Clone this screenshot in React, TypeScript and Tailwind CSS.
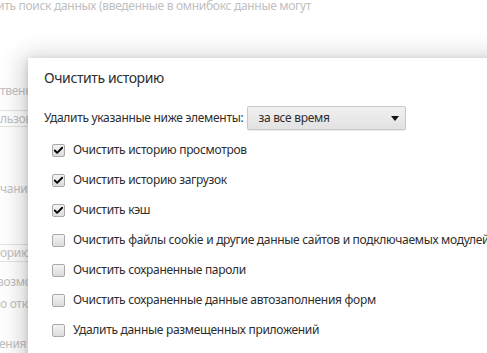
import { Check } from "lucide-react";

const items = [
  { label: "Очистить историю просмотров", checked: true },
  { label: "Очистить историю загрузок", checked: true },
  { label: "Очистить кэш", checked: true },
  { label: "Очистить файлы cookie и другие данные сайтов и подключаемых модулей", checked: false },
  { label: "Очистить сохраненные пароли", checked: false },
  { label: "Очистить сохраненные данные автозаполнения форм", checked: false },
  { label: "Удалить данные размещенных приложений", checked: false },
];

function Checkbox({ checked }: { checked: boolean }) {
  return (
    <span className="flex h-[13px] w-[13px] shrink-0 items-center justify-center rounded-[2px] border border-[#a9a9a9] bg-gradient-to-b from-[#f3f3f3] to-[#dcdcdc]">
      {checked && <Check className="h-[11px] w-[11px] text-black" strokeWidth={4} />}
    </span>
  );
}

export default function App() {
  return (
    <div
      className="relative h-[353px] w-[487px] overflow-hidden bg-white text-[12px] tracking-[-0.3px] text-[#c0c0c0]"
      style={{ fontFamily: "'Noto Sans', 'Open Sans', sans-serif" }}
    >
      {/* page behind the dialog */}
      <div className="flex flex-col whitespace-nowrap">
        <p className="-ml-[3px] mt-[1px] h-[11px] leading-[10px]">
          ить поиск данных (введенные в омнибокс данные могут
        </p>
        <p className="mt-[70px] leading-[18px]">твенные</p>
        <div className="mt-[10px] h-[17px] border-y border-[#e4e4e4] leading-[15px]">
          <span className="block">льзователь</span>
        </div>
        <p className="mt-[53px] leading-[18px]">чанию</p>
        <div className="mt-[46px] h-[18px] border-y border-[#e4e4e4] leading-[16px]">
          <span className="block">орию</span>
        </div>
        <p className="-ml-[3px] mt-[11px] leading-[18px]">возмож</p>
        <p className="mt-[4px] leading-[18px]">о откл</p>
        <p className="-ml-[1px] mt-[22px] leading-[18px]">ения</p>
      </div>

      {/* dialog */}
      <div className="absolute left-[28px] top-[58px] h-[320px] w-[480px] bg-white pl-[16px] pt-[10px] text-[#2e2e2e] shadow-[0_4px_23px_5px_rgba(0,0,0,0.2),0_2px_6px_rgba(0,0,0,0.15)]">
        <h1 className="text-[14px] leading-[20px] tracking-[-0.4px]">Очистить историю</h1>
        <div className="mt-[18px] flex h-[24px] items-center gap-[4px] whitespace-nowrap">
          <span>Удалить указанные ниже элементы:</span>
          <div className="flex h-[24px] w-[159px] items-center justify-between rounded-[2px] border border-[#c8c8c8] bg-gradient-to-b from-[#f0f0f0] to-[#e2e2e2] pl-[10px] pr-[6px] shadow-[0_1px_1px_rgba(0,0,0,0.08)]">
            <span>за все время</span>
            <svg width="8" height="5" viewBox="0 0 8 5" className="mt-[1px]">
              <path d="M0 0 H8 L4 5 Z" fill="#111" />
            </svg>
          </div>
        </div>
        <ul className="mt-[5px] flex flex-col pl-[8px]">
          {items.map((it) => (
            <li key={it.label} className="flex h-[30px] items-center gap-[8px] whitespace-nowrap">
              <Checkbox checked={it.checked} />
              <span>{it.label}</span>
            </li>
          ))}
        </ul>
      </div>
    </div>
  );
}
